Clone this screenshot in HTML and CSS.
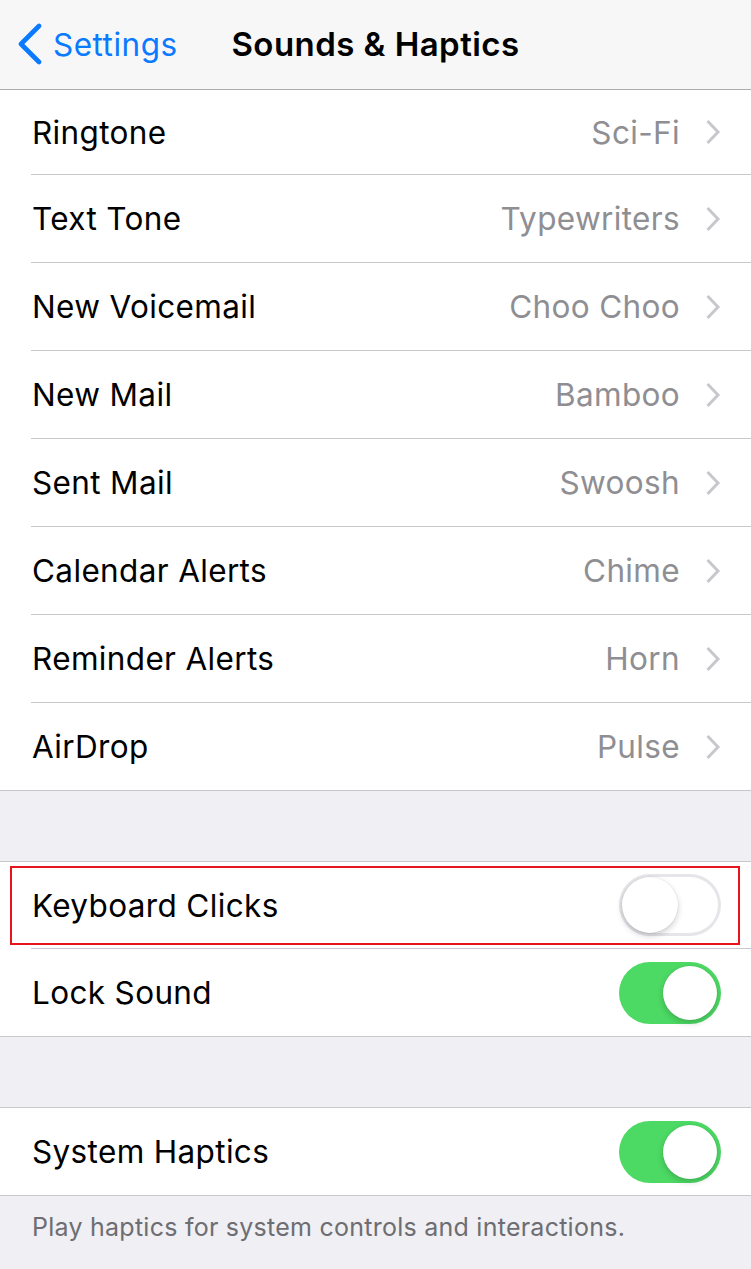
FILE: index.html
```html
<!DOCTYPE html>
<html>
<head>
<meta charset="utf-8">
<link rel="stylesheet" href="styles.css">
</head>
<body>
<header class="nav">
  <div class="nav-left">
    <svg class="back-icon" width="26" height="42" viewBox="0 0 26 42"><path d="M22 3 L4 21 L22 39" fill="none" stroke="#0a7aff" stroke-width="4.6" stroke-linecap="round" stroke-linejoin="round"/></svg>
    <span class="back-text">Settings</span>
  </div>
  <div class="nav-title">Sounds &amp; Haptics</div>
  <div class="nav-right"></div>
</header>

<section class="group">
  <div class="row first"><div class="cell"><span class="label">Ringtone</span><span class="value">Sci-Fi</span><svg class="chev" width="16" height="26" viewBox="0 0 16 26"><path d="M2.5 2 L13 13 L2.5 24" fill="none" stroke="#c7c7cc" stroke-width="3"/></svg></div></div>
  <div class="row"><div class="cell"><span class="label">Text Tone</span><span class="value">Typewriters</span><svg class="chev" width="16" height="26" viewBox="0 0 16 26"><path d="M2.5 2 L13 13 L2.5 24" fill="none" stroke="#c7c7cc" stroke-width="3"/></svg></div></div>
  <div class="row"><div class="cell"><span class="label">New Voicemail</span><span class="value">Choo Choo</span><svg class="chev" width="16" height="26" viewBox="0 0 16 26"><path d="M2.5 2 L13 13 L2.5 24" fill="none" stroke="#c7c7cc" stroke-width="3"/></svg></div></div>
  <div class="row"><div class="cell"><span class="label">New Mail</span><span class="value">Bamboo</span><svg class="chev" width="16" height="26" viewBox="0 0 16 26"><path d="M2.5 2 L13 13 L2.5 24" fill="none" stroke="#c7c7cc" stroke-width="3"/></svg></div></div>
  <div class="row"><div class="cell"><span class="label">Sent Mail</span><span class="value">Swoosh</span><svg class="chev" width="16" height="26" viewBox="0 0 16 26"><path d="M2.5 2 L13 13 L2.5 24" fill="none" stroke="#c7c7cc" stroke-width="3"/></svg></div></div>
  <div class="row"><div class="cell"><span class="label">Calendar Alerts</span><span class="value">Chime</span><svg class="chev" width="16" height="26" viewBox="0 0 16 26"><path d="M2.5 2 L13 13 L2.5 24" fill="none" stroke="#c7c7cc" stroke-width="3"/></svg></div></div>
  <div class="row"><div class="cell"><span class="label">Reminder Alerts</span><span class="value">Horn</span><svg class="chev" width="16" height="26" viewBox="0 0 16 26"><path d="M2.5 2 L13 13 L2.5 24" fill="none" stroke="#c7c7cc" stroke-width="3"/></svg></div></div>
  <div class="row last"><div class="cell"><span class="label">AirDrop</span><span class="value">Pulse</span><svg class="chev" width="16" height="26" viewBox="0 0 16 26"><path d="M2.5 2 L13 13 L2.5 24" fill="none" stroke="#c7c7cc" stroke-width="3"/></svg></div></div>
</section>

<div class="spacer"></div>

<section class="group">
  <div class="row toggle-row highlighted h86"><div class="cell"><span class="label">Keyboard Clicks</span><span class="switch off"><span class="knob"></span></span></div></div>
  <div class="row toggle-row last"><div class="cell"><span class="label">Lock Sound</span><span class="switch on"><span class="knob"></span></span></div></div>
</section>

<div class="spacer"></div>

<section class="group">
  <div class="row toggle-row last"><div class="cell"><span class="label">System Haptics</span><span class="switch on"><span class="knob"></span></span></div></div>
</section>

<p class="footnote">Play haptics for system controls and interactions.</p>
</body>
</html>
```

FILE: styles.css
```css
* { box-sizing: border-box; }
html, body {
  margin: 0;
  padding: 0;
  background: #efeff4;
  font-family: "Inter", "Roboto", "Liberation Sans", sans-serif;
  -webkit-font-smoothing: antialiased;
}

.nav {
  height: 90px;
  background: #f7f7f7;
  border-bottom: 1px solid #acacb0;
  display: grid;
  grid-template-columns: 1fr auto 1fr;
  align-items: center;
  padding-bottom: 1px;
}
.nav-left {
  display: flex;
  align-items: center;
  padding-left: 17px;
  gap: 10px;
  color: #0a7aff;
}
.back-icon { display: block; }
.back-text {
  font-size: 31.5px;
  letter-spacing: 0.5px;
  color: #0a7aff;
}
.nav-title {
  font-size: 33px;
  font-weight: 600;
  color: #000;
  letter-spacing: 0.45px;
}

.group {
  background: #fff;
  border-top: 1px solid #c8c7cc;
  border-bottom: 1px solid #c8c7cc;
}
.group:first-of-type { border-top: none; }

.row { padding-left: 31px; }
.cell {
  height: 88px;
  display: flex;
  align-items: center;
  border-bottom: 1px solid #c8c7cc;
  padding-right: 30px;
}
.row.first .cell { height: 85px; }
.row.h86 .cell { height: 87px; }
.row.last .cell { border-bottom: none; height: 87px; }

.label {
  flex: 1;
  font-size: 31.5px;
  color: #000;
  letter-spacing: 0.35px;
  padding-left: 1px;
}
.value {
  font-size: 31.5px;
  color: #8e8e93;
  letter-spacing: 0.35px;
  margin-right: 25px;
}
.chev { display: block; flex: none; }

.spacer { height: 70px; }

.toggle-row { position: relative; }
.highlighted::after {
  content: "";
  position: absolute;
  left: 10px;
  right: 11px;
  top: 4px;
  bottom: 4px;
  border: 2px solid #e8141c;
  pointer-events: none;
}

.switch {
  flex: none;
  width: 102px;
  height: 62px;
  border-radius: 31px;
  display: flex;
  align-items: center;
  padding: 0 3px;
}
.switch.off {
  background: #fff;
  box-shadow: inset 0 0 0 3px #e5e5ea;
  justify-content: flex-start;
}
.switch.on {
  background: #4cd964;
  justify-content: flex-end;
  padding: 0 4px;
}
.knob {
  width: 56px;
  height: 56px;
  border-radius: 50%;
  background: #fff;
  box-shadow: 0 3px 6px rgba(0,0,0,0.18), 0 0 0 0.5px rgba(0,0,0,0.08);
}
.switch.on .knob { width: 54px; height: 54px; }

.footnote {
  margin: 0;
  padding: 14px 32px 0 32px;
  font-size: 25px;
  color: #6d6d72;
  letter-spacing: 0.25px;
  line-height: 34px;
}
```
